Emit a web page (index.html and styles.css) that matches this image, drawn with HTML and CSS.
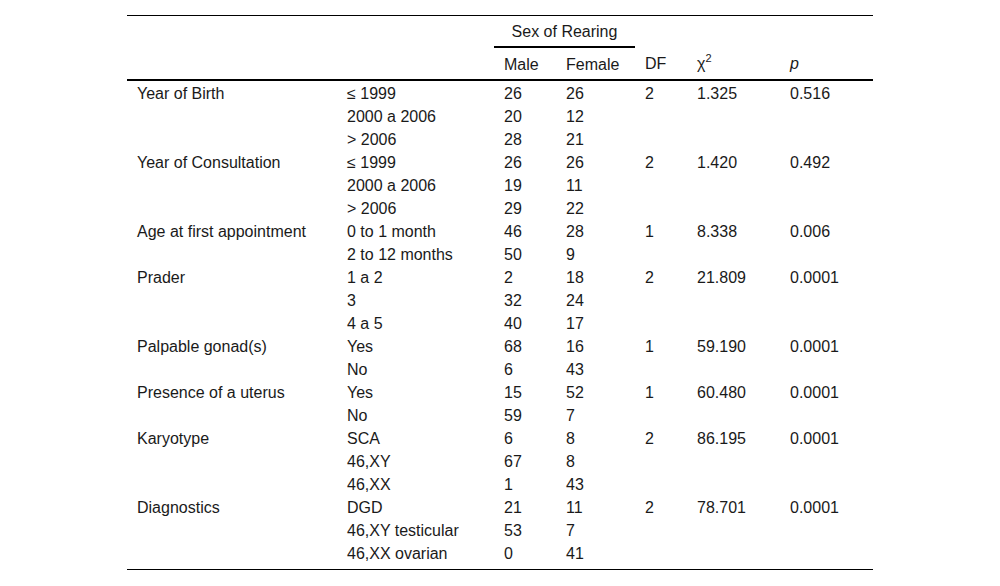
FILE: index.html
```html
<!DOCTYPE html>
<html>
<head>
<meta charset="utf-8">
<link rel="stylesheet" href="styles.css">
</head>
<body>
<table class="tbl">
  <colgroup>
    <col class="c1"><col class="c2"><col class="c3"><col class="c4"><col class="c5"><col class="c6"><col class="c7">
  </colgroup>
  <thead>
    <tr class="h1">
      <th></th><th></th>
      <th colspan="2" class="group">Sex of Rearing</th>
      <th></th><th></th><th></th>
    </tr>
    <tr class="h2">
      <th></th><th></th>
      <th>Male</th><th>Female</th><th>DF</th><th>χ<sup>2</sup></th><th><i>p</i></th>
    </tr>
  </thead>
  <tbody>
    <tr><td>Year of Birth</td><td>≤ 1999</td><td>26</td><td>26</td><td>2</td><td>1.325</td><td>0.516</td></tr>
    <tr><td></td><td>2000 a 2006</td><td>20</td><td>12</td><td></td><td></td><td></td></tr>
    <tr><td></td><td>&gt; 2006</td><td>28</td><td>21</td><td></td><td></td><td></td></tr>
    <tr><td>Year of Consultation</td><td>≤ 1999</td><td>26</td><td>26</td><td>2</td><td>1.420</td><td>0.492</td></tr>
    <tr><td></td><td>2000 a 2006</td><td>19</td><td>11</td><td></td><td></td><td></td></tr>
    <tr><td></td><td>&gt; 2006</td><td>29</td><td>22</td><td></td><td></td><td></td></tr>
    <tr><td>Age at first appointment</td><td>0 to 1 month</td><td>46</td><td>28</td><td>1</td><td>8.338</td><td>0.006</td></tr>
    <tr><td></td><td>2 to 12 months</td><td>50</td><td>9</td><td></td><td></td><td></td></tr>
    <tr><td>Prader</td><td>1 a 2</td><td>2</td><td>18</td><td>2</td><td>21.809</td><td>0.0001</td></tr>
    <tr><td></td><td>3</td><td>32</td><td>24</td><td></td><td></td><td></td></tr>
    <tr><td></td><td>4 a 5</td><td>40</td><td>17</td><td></td><td></td><td></td></tr>
    <tr><td>Palpable gonad(s)</td><td>Yes</td><td>68</td><td>16</td><td>1</td><td>59.190</td><td>0.0001</td></tr>
    <tr><td></td><td>No</td><td>6</td><td>43</td><td></td><td></td><td></td></tr>
    <tr><td>Presence of a uterus</td><td>Yes</td><td>15</td><td>52</td><td>1</td><td>60.480</td><td>0.0001</td></tr>
    <tr><td></td><td>No</td><td>59</td><td>7</td><td></td><td></td><td></td></tr>
    <tr><td>Karyotype</td><td>SCA</td><td>6</td><td>8</td><td>2</td><td>86.195</td><td>0.0001</td></tr>
    <tr><td></td><td>46,XY</td><td>67</td><td>8</td><td></td><td></td><td></td></tr>
    <tr><td></td><td>46,XX</td><td>1</td><td>43</td><td></td><td></td><td></td></tr>
    <tr><td>Diagnostics</td><td>DGD</td><td>21</td><td>11</td><td>2</td><td>78.701</td><td>0.0001</td></tr>
    <tr><td></td><td>46,XY testicular</td><td>53</td><td>7</td><td></td><td></td><td></td></tr>
    <tr class="last"><td></td><td>46,XX ovarian</td><td>0</td><td>41</td><td></td><td></td><td></td></tr>
  </tbody>
</table>
</body>
</html>
```
FILE: styles.css
```css
html, body {
  margin: 0;
  padding: 0;
  background: #fff;
}
body {
  padding: 15px 127px 0 127px;
  font-family: "Liberation Sans", Arial, sans-serif;
  font-size: 16px;
  color: #1a1a1a;
}
.tbl {
  width: 746px;
  border-collapse: collapse;
  table-layout: fixed;
  border-top: 1px solid #000;
  border-bottom: 1px solid #000;
}
.c1 { width: 210px; }
.c2 { width: 157px; }
.c3 { width: 62px; }
.c4 { width: 79px; }
.c5 { width: 52px; }
.c6 { width: 93px; }
.c7 { width: 93px; }
.tbl th, .tbl td {
  text-align: left;
  font-weight: normal;
  padding: 0 10px;
  vertical-align: top;
  white-space: nowrap;
}
.h1 th {
  line-height: 28px;
  padding-top: 2px;
}
.h1 th.group {
  text-align: center;
  border-bottom: 2px solid #000;
  padding-left: 0;
  padding-right: 0;
}
.h2 th {
  line-height: 29px;
  padding-top: 2px;
  border-bottom: 2px solid #000;
}
.h2 sup {
  font-size: 11px;
  line-height: 0;
  vertical-align: 7px;
}
.tbl tbody td {
  line-height: 20px;
  padding-top: 3px;
  padding-bottom: 0;
}
.tbl tbody .last td {
  padding-bottom: 5px;
}
```
